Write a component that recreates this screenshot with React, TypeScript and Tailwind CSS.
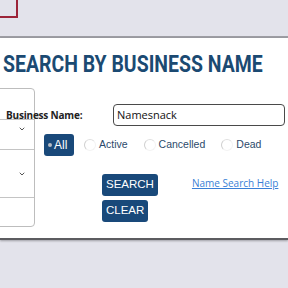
import React from 'react';
import { ChevronDown } from 'lucide-react';

const statuses = ['Active', 'Cancelled', 'Dead'];

function Radio({ label }: { label: string }) {
  return (
    <label className="flex items-center gap-[3px] text-[10.5px] text-[#2c4a6b]">
      <span className="w-[12px] h-[12px] rounded-full border border-[#f3f3f3] border-l-[#cfcfcf] border-t-[#e0e0e0]" />
      {label}
    </label>
  );
}

export default function App() {
  return (
    <div className="w-[288px] h-[288px] overflow-hidden bg-[#e3e3eb] font-['Liberation_Sans',sans-serif]">
      <div className="h-[38px] border-b-2 border-[#9d9da3]">
        <div className="w-[18px] h-[18px] border-r-2 border-b-2 border-[#9c2439]" />
      </div>

      <div className="h-[202px] bg-white border-b-2 border-[#5c5c60] shadow-[0_1px_2px_rgba(0,0,0,0.3)]">
        <h1 className="pt-[12px] pl-[3px] whitespace-nowrap">
          <span className="inline-block origin-left scale-x-[0.81] font-['Roboto',sans-serif] font-bold text-[24px] leading-[28px] text-[#1b4a72]">
            SEARCH BY BUSINESS NAME
          </span>
        </h1>

        <div className="flex mt-[9px]">
          <div className="-ml-[8px] w-[43px] h-[139px] shrink-0 flex flex-col border border-[#bdbdbd] rounded-[4px]">
            <div className="h-[31px] border-b border-[#c4c4c4]" />
            <div className="h-[30px] border-b border-[#c4c4c4] flex justify-end pr-[8px] pt-[5px]">
              <ChevronDown size={8} strokeWidth={3} className="text-[#555]" />
            </div>
            <div className="h-[48px] border-b border-[#c4c4c4] flex justify-end items-center pr-[8px]">
              <ChevronDown size={8} strokeWidth={3} className="text-[#555]" />
            </div>
            <div className="flex-1" />
          </div>

          <div className="-ml-[29px] flex-1 pt-[16px]">
            <div className="flex items-center h-[22px]">
              <span className="w-[107px] font-['Open_Sans',sans-serif] font-bold text-[10px] tracking-[-0.2px] text-[#222]">Business Name:</span>
              <div className="w-[172px] h-[22px] rounded-[4px] border-[1.5px] border-[#4a4a4a] flex items-center pl-[3px] font-['Open_Sans',sans-serif] text-[11px] text-[#111]">
                Namesnack
              </div>
            </div>

            <div className="flex items-center mt-[8px] ml-[38px] h-[22px]">
              <div className="w-[30px] h-[22px] rounded-[3px] bg-[#19497a] flex items-center gap-[2px] pl-[4px] text-[12px] text-white">
                <span className="w-[4px] h-[4px] rounded-full bg-[#b8bcc4]" />
                All
              </div>
              <div className="flex items-center ml-[10px] gap-[16px]">
                {statuses.map((s) => (
                  <Radio key={s} label={s} />
                ))}
              </div>
            </div>

            <div className="flex mt-[18px] ml-[96px]">
              <div className="flex flex-col items-start gap-[4px]">
                <button className="h-[22px] px-[4px] rounded-[3px] bg-[#19497a] text-white text-[11.5px]">SEARCH</button>
                <button className="h-[22px] px-[4px] rounded-[3px] bg-[#19497a] text-white text-[11.5px]">CLEAR</button>
              </div>
              <a className="ml-[34px] mt-[2px] font-['Open_Sans',sans-serif] text-[10px] text-[#3a7fd6] underline">Name Search Help</a>
            </div>
          </div>
        </div>
      </div>
    </div>
  );
}
